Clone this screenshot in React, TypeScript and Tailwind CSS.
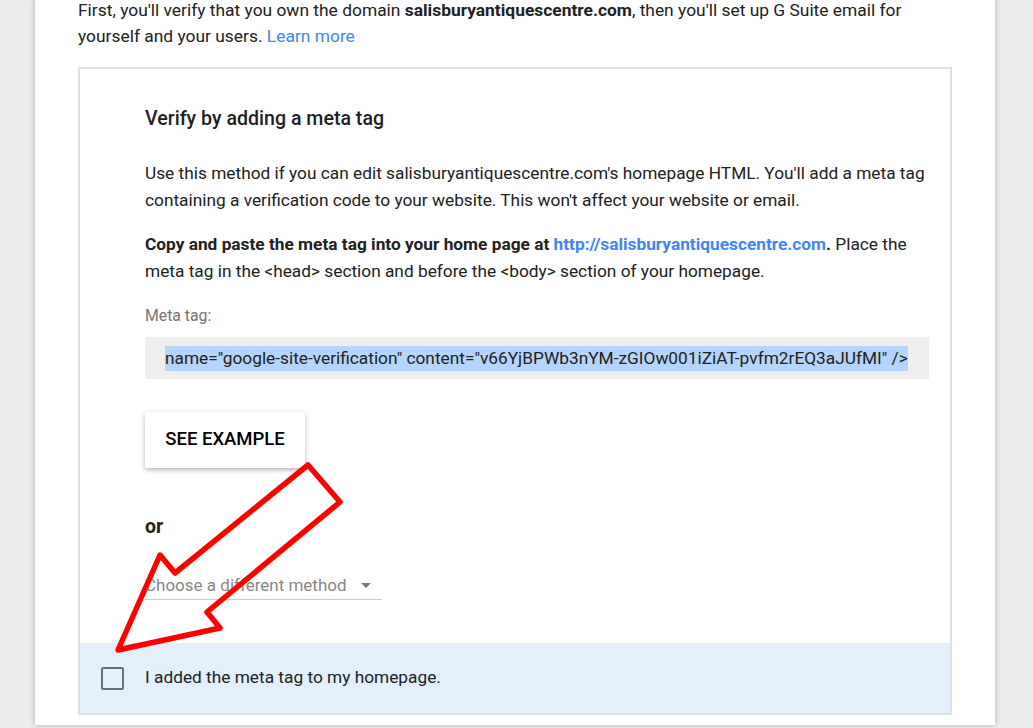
import React from 'react';

const font = { fontFamily: 'Roboto, "Liberation Sans", Arial, sans-serif' };

const RedArrow = () => (
  <svg className="absolute left-0 top-0 pointer-events-none" width="1033" height="728" viewBox="0 0 1033 728">
    <polygon
      points="118,650 160,555 175,573 308,465 340,502 207,612 220,628"
      fill="none"
      stroke="#ff0000"
      strokeWidth="5.5"
      strokeLinejoin="round"
    />
  </svg>
);

const App = () => {
  return (
    <div className="relative w-[1033px] h-[728px] overflow-hidden bg-[#ececec]" style={font}>
      <div className="ml-[35px] w-[960px] h-full bg-white shadow-[0_0_6px_rgba(0,0,0,0.25)] pl-[43px] pr-[43px] text-[#212121]">
        <p className="mt-[-3px] text-[17.4px] leading-[26px]">
          First, you'll verify that you own the domain <b className="font-bold">salisburyantiquescentre.com</b>, then you'll set up G Suite email for yourself and your users.{' '}
          <a className="text-[#4285f4]">Learn more</a>
        </p>

        <div className="mt-[18px] border-2 border-[#e0e0e0] w-[874px]">
          <div className="pl-[65px] pr-[12px] pt-[37px]">
            <h2 className="text-[19.6px] leading-[26px] font-medium">Verify by adding a meta tag</h2>

            <p className="mt-[28px] text-[17.3px] leading-[27px]">
              Use this method if you can edit salisburyantiquescentre.com's homepage HTML. You'll add a meta tag containing a verification code to your website. This won't affect your website or email.
            </p>

            <p className="mt-[17px] text-[17.3px] leading-[27px]">
              <b className="font-bold">Copy and paste the meta tag into your home page at </b>
              <a className="font-bold text-[#4285f4]">http://salisburyantiquescentre.com</a>
              <b className="font-bold">.</b> Place the meta tag in the &lt;head&gt; section and before the &lt;body&gt; section of your homepage.
            </p>

            <div className="mt-[21px] text-[15.8px] leading-[20px] text-[#757575]">Meta tag:</div>

            <div className="mt-[11px] mr-[9px] h-[42px] bg-[#eeeeee] flex items-center pl-[20px] pr-[22px] overflow-hidden whitespace-nowrap">
              <span className="bg-[#b4d5fd] text-[17.3px] leading-[25px]">
                name="google-site-verification" content="v66YjBPWb3nYM-zGIOw001iZiAT-pvfm2rEQ3aJUfMI" /&gt;
              </span>
            </div>

            <button className="mt-[33px] w-[160px] h-[56px] bg-white rounded-[2px] shadow-[0_2px_5px_rgba(0,0,0,0.3)] text-[18.5px] font-medium uppercase text-black">
              See example
            </button>

            <div className="mt-[46px] text-[19.5px] leading-[26px] font-bold">or</div>

            <div className="mt-[34px] w-[237px] border-b border-[#ccc] flex items-center justify-between pb-[3px]">
              <span className="text-[17px] leading-[22px] text-[#888]">Choose a different method</span>
              <span className="mr-[11px] w-0 h-0 border-l-[5px] border-r-[5px] border-t-[5px] border-l-transparent border-r-transparent border-t-[#777]" />
            </div>
          </div>

          <div className="mt-[43px] h-[70px] bg-[#e3f0fb] flex items-center pl-[21px]">
            <span className="w-[23px] h-[23px] border-2 border-[#6b6f74] rounded-[2px]" />
            <span className="ml-[21px] text-[17.3px] text-[#212121]">I added the meta tag to my homepage.</span>
          </div>
        </div>
      </div>
      <RedArrow />
    </div>
  );
};

export default App;
